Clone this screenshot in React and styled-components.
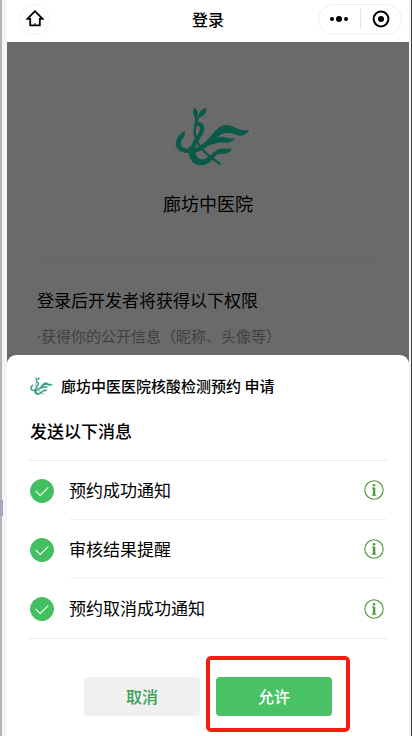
import React, { useState } from "react";
import styled, { createGlobalStyle } from "styled-components";

const messages = [
  { id: "booked", name: "预约成功通知" },
  { id: "review", name: "审核结果提醒" },
  { id: "cancelled", name: "预约取消成功通知" },
];

const GlobalStyle = createGlobalStyle`
  * {
    box-sizing: border-box;
  }

  body {
    margin: 0;
    color: #000;
    background-color: #f3f3f5;
    font-family: "Noto Sans CJK SC", "Noto Sans", sans-serif;
  }

  button {
    padding: 0;
    border: none;
    background: none;
    font-family: inherit;
    cursor: pointer;
  }
`;

const Frame = styled.div`
  position: relative;
  min-height: 100vh;
  display: flex;
  padding: 0 2px 0 5px;
  border-left: 2px solid #b4b3b8;
  border-right: 1px solid #3c3c40;

  /* handle on the window edge */
  &::before {
    content: "";
    position: absolute;
    left: -2px;
    bottom: 220px;
    width: 3px;
    height: 16px;
    background-color: #a3a9c4;
  }
`;

const Screen = styled.div`
  position: relative;
  flex: 1;
  min-width: 0;
  display: flex;
  flex-direction: column;
  background-color: #6a6a6a;
`;

const TopBar = styled.header`
  height: 42px;
  padding: 0 7px 4px;
  display: grid;
  grid-template-columns: 1fr auto 1fr;
  align-items: center;
  background-color: #fff;
`;

const PageTitle = styled.h1`
  margin: 0;
  font-size: 16px;
  line-height: 24px;
  font-weight: 500;
`;

const HomeButton = styled.button`
  width: 31px;
  height: 31px;
  margin-left: 5px;
  display: flex;
  align-items: center;
  justify-content: center;
  border: 1px solid #f4f4f4;
  border-radius: 50%;
`;

const Capsule = styled.div`
  justify-self: end;
  width: 84px;
  height: 31px;
  display: flex;
  align-items: center;
  border: 1px solid #f0f0f0;
  border-radius: 16px;
`;

const CapsuleButton = styled.button`
  flex: 1;
  height: 20px;
  display: flex;
  align-items: center;
  justify-content: center;

  & + & {
    border-left: 1px solid #e4e4e4;
  }
`;

const Profile = styled.main`
  padding: 50px 30px 0;
`;

const Avatar = styled.div`
  width: 86px;
  height: 86px;
  margin: 0 auto;
  padding: 3px 0 0 8px;
  display: flex;
  align-items: center;
  justify-content: center;
  border: 1px solid #6f6f6f;
  border-radius: 50%;
`;

const HospitalName = styled.h2`
  margin: 12px 4px 0;
  padding-bottom: 40px;
  font-size: 18px;
  line-height: 27px;
  font-weight: 400;
  text-align: center;
  border-bottom: 1px solid #656565;
`;

const ScopeTitle = styled.h3`
  margin: 29px 0 0;
  font-size: 17px;
  line-height: 25px;
  font-weight: 400;
`;

const ScopeText = styled.p`
  margin: 13px 0 0;
  font-family: "Noto Sans", "Noto Sans CJK SC", sans-serif;
  font-size: 15px;
  line-height: 22px;
  color: #414141;
`;

const Sheet = styled.section`
  position: absolute;
  left: 0;
  right: 0;
  bottom: 0;
  padding: 18px 22px 20px;
  background-color: #fff;
  border-radius: 9px 9px 0 0;
`;

const SheetHeader = styled.div`
  display: flex;
  align-items: center;
  gap: 8px;
  padding-left: 1px;
  font-size: 15px;
  line-height: 26px;
  font-weight: 500;
`;

const SheetTitle = styled.h2`
  margin: 0;
  padding: 19px 1px 17px;
  font-size: 17px;
  line-height: 25px;
  font-weight: 500;
`;

const MessageList = styled.ul`
  margin: 0;
  padding: 0;
  list-style: none;
  border-top: 1px solid #ededed;
  border-bottom: 1px solid #ededed;
`;

const MessageItem = styled.li`
  height: 59px;
  padding-left: 1px;
  display: flex;
  align-items: center;
  gap: 15px;
`;

const CheckBox = styled.input`
  appearance: none;
  flex: none;
  width: 24px;
  height: 24px;
  margin: 0;
  border: 1px solid #c8c8c8;
  border-radius: 50%;
  display: grid;
  place-items: center;
  cursor: pointer;

  &:checked {
    border-color: #43be60;
    background-color: #43be60;
  }

  &:checked::before {
    content: "";
    width: 11px;
    height: 6px;
    margin-bottom: 3px;
    border-left: 1px solid #fff;
    border-bottom: 1px solid #fff;
    transform: rotate(-45deg);
  }
`;

const MessageBody = styled.div`
  flex: 1;
  height: 100%;
  padding-right: 3px;
  display: flex;
  align-items: center;
  justify-content: space-between;

  ${MessageItem}:not(:last-child) & {
    border-bottom: 1px solid #f1f1f1;
  }
`;

const MessageLabel = styled.label`
  padding-bottom: 2px;
  font-size: 17px;
  line-height: 25px;
`;

const InfoButton = styled.button`
  width: 20px;
  height: 20px;
  display: flex;
`;

const Actions = styled.div`
  margin-top: 38px;
  display: flex;
  justify-content: center;
  gap: 16px;
`;

const ActionButton = styled.button`
  width: 116px;
  height: 39px;
  padding-bottom: 2px;
  border-radius: 4px;
  font-size: 16px;
  line-height: 24px;
  font-weight: 500;
  color: ${(props) => (props.$primary ? "#fff" : "#35a455")};
  background-color: ${(props) => (props.$primary ? "#49c265" : "#f0f0f0")};
`;

const Highlight = styled.div`
  position: relative;

  &::after {
    content: "";
    position: absolute;
    inset: -21px -18px -16px -10px;
    border: 4px solid #f91d10;
    border-radius: 5px;
    pointer-events: none;
  }
`;

const Logo = ({ width, color }) => (
  <svg
    width={width}
    viewBox="75 80 225 178"
    fill="none"
    stroke={color}
    strokeLinecap="round"
    aria-hidden="true"
  >
    <g fill={color} strokeWidth="3">
      <path d="M138 112C129 106 129 92 134 83C143 91 146 103 138 112Z" />
      <path d="M147 110C147 97 156 87 168 84C169 98 161 108 147 110Z" />
      <path d="M103 155C90 158 80 173 78 192C80 210 98 218 122 217C164 215 179 187 206 166C225 151 243 156 262 163C276 169 289 160 296 150C277 155 260 145 243 138C226 130 208 139 194 155C176 176 156 204 122 207C101 208 88 199 92 184C95 174 105 171 103 155Z" />
      <path d="M176 193C190 180 202 169 217 171C229 172 240 178 253 176C241 187 229 187 217 185C202 183 190 192 176 193Z" />
      <path d="M118 200C113 227 124 249 146 253C172 256 187 239 196 226C204 217 216 220 226 219C235 217 241 211 244 206C231 208 219 203 207 208C190 214 180 233 161 238C146 241 134 230 134 205Z" />
    </g>
    <path d="M141 131C154 130 160 140 154 155C148 170 129 188 126 211" strokeWidth="13" />
    <path d="M138 110C142 122 131 139 134 159C137 184 157 211 179 228C190 236 200 243 209 250" strokeWidth="7" />
    <path d="M147 109L140 122" strokeWidth="5" />
  </svg>
);

const HomeIcon = () => (
  <svg width="18" height="18" viewBox="0 0 18 18" fill="none" stroke="#000" strokeWidth="1.8">
    <path d="M9 1.2L1.4 8.8H4.2V15.4H13.8V8.8H16.6Z" />
    <path d="M9 13V16" strokeWidth="1" />
  </svg>
);

const MoreIcon = () => (
  <svg width="20" height="8" viewBox="0 0 20 8">
    <circle cx="3" cy="4" r="2" />
    <circle cx="10" cy="4" r="3" />
    <circle cx="17" cy="4" r="2" />
  </svg>
);

const CloseIcon = () => (
  <svg width="18" height="18" viewBox="0 0 18 18">
    <circle cx="9" cy="9" r="7.4" fill="none" stroke="#000" strokeWidth="2" />
    <circle cx="9" cy="9" r="3" />
  </svg>
);

const InfoIcon = () => (
  <svg width="20" height="20" viewBox="0 0 20 20" fill="#4c963b">
    <circle cx="10" cy="10" r="9.2" fill="none" stroke="#4c963b" strokeWidth="1.1" />
    <circle cx="10" cy="5.2" r="1.3" />
    <path d="M8 7.6H11.3V14.8H12.3V15.8H7.8V14.8H8.9V8.6H8Z" />
  </svg>
);

const App = () => {
  const [selected, setSelected] = useState(messages.map((item) => item.id));

  const toggle = (id) =>
    setSelected(
      selected.includes(id) ? selected.filter((s) => s !== id) : [...selected, id]
    );

  return (
    <>
      <GlobalStyle />
      <Frame>
        <Screen>
          <TopBar>
            <HomeButton aria-label="首页">
              <HomeIcon />
            </HomeButton>
            <PageTitle>登录</PageTitle>
            <Capsule>
              <CapsuleButton aria-label="更多">
                <MoreIcon />
              </CapsuleButton>
              <CapsuleButton aria-label="关闭">
                <CloseIcon />
              </CapsuleButton>
            </Capsule>
          </TopBar>

          <Profile>
            <Avatar>
              <Logo width={75} color="#0b5949" />
            </Avatar>
            <HospitalName>廊坊中医院</HospitalName>
            <ScopeTitle>登录后开发者将获得以下权限</ScopeTitle>
            <ScopeText>·获得你的公开信息（昵称、头像等）</ScopeText>
          </Profile>

          <Sheet>
            <SheetHeader>
              <Logo width={23} color="#2f9d80" />
              <span>廊坊中医医院核酸检测预约 申请</span>
            </SheetHeader>
            <SheetTitle>发送以下消息</SheetTitle>
            <MessageList>
              {messages.map((item) => (
                <MessageItem key={item.id}>
                  <CheckBox
                    type="checkbox"
                    id={item.id}
                    checked={selected.includes(item.id)}
                    onChange={() => toggle(item.id)}
                  />
                  <MessageBody>
                    <MessageLabel htmlFor={item.id}>{item.name}</MessageLabel>
                    <InfoButton aria-label="详情">
                      <InfoIcon />
                    </InfoButton>
                  </MessageBody>
                </MessageItem>
              ))}
            </MessageList>
            <Actions>
              <ActionButton>取消</ActionButton>
              <Highlight>
                <ActionButton $primary>允许</ActionButton>
              </Highlight>
            </Actions>
          </Sheet>
        </Screen>
      </Frame>
    </>
  );
};

export default App;
